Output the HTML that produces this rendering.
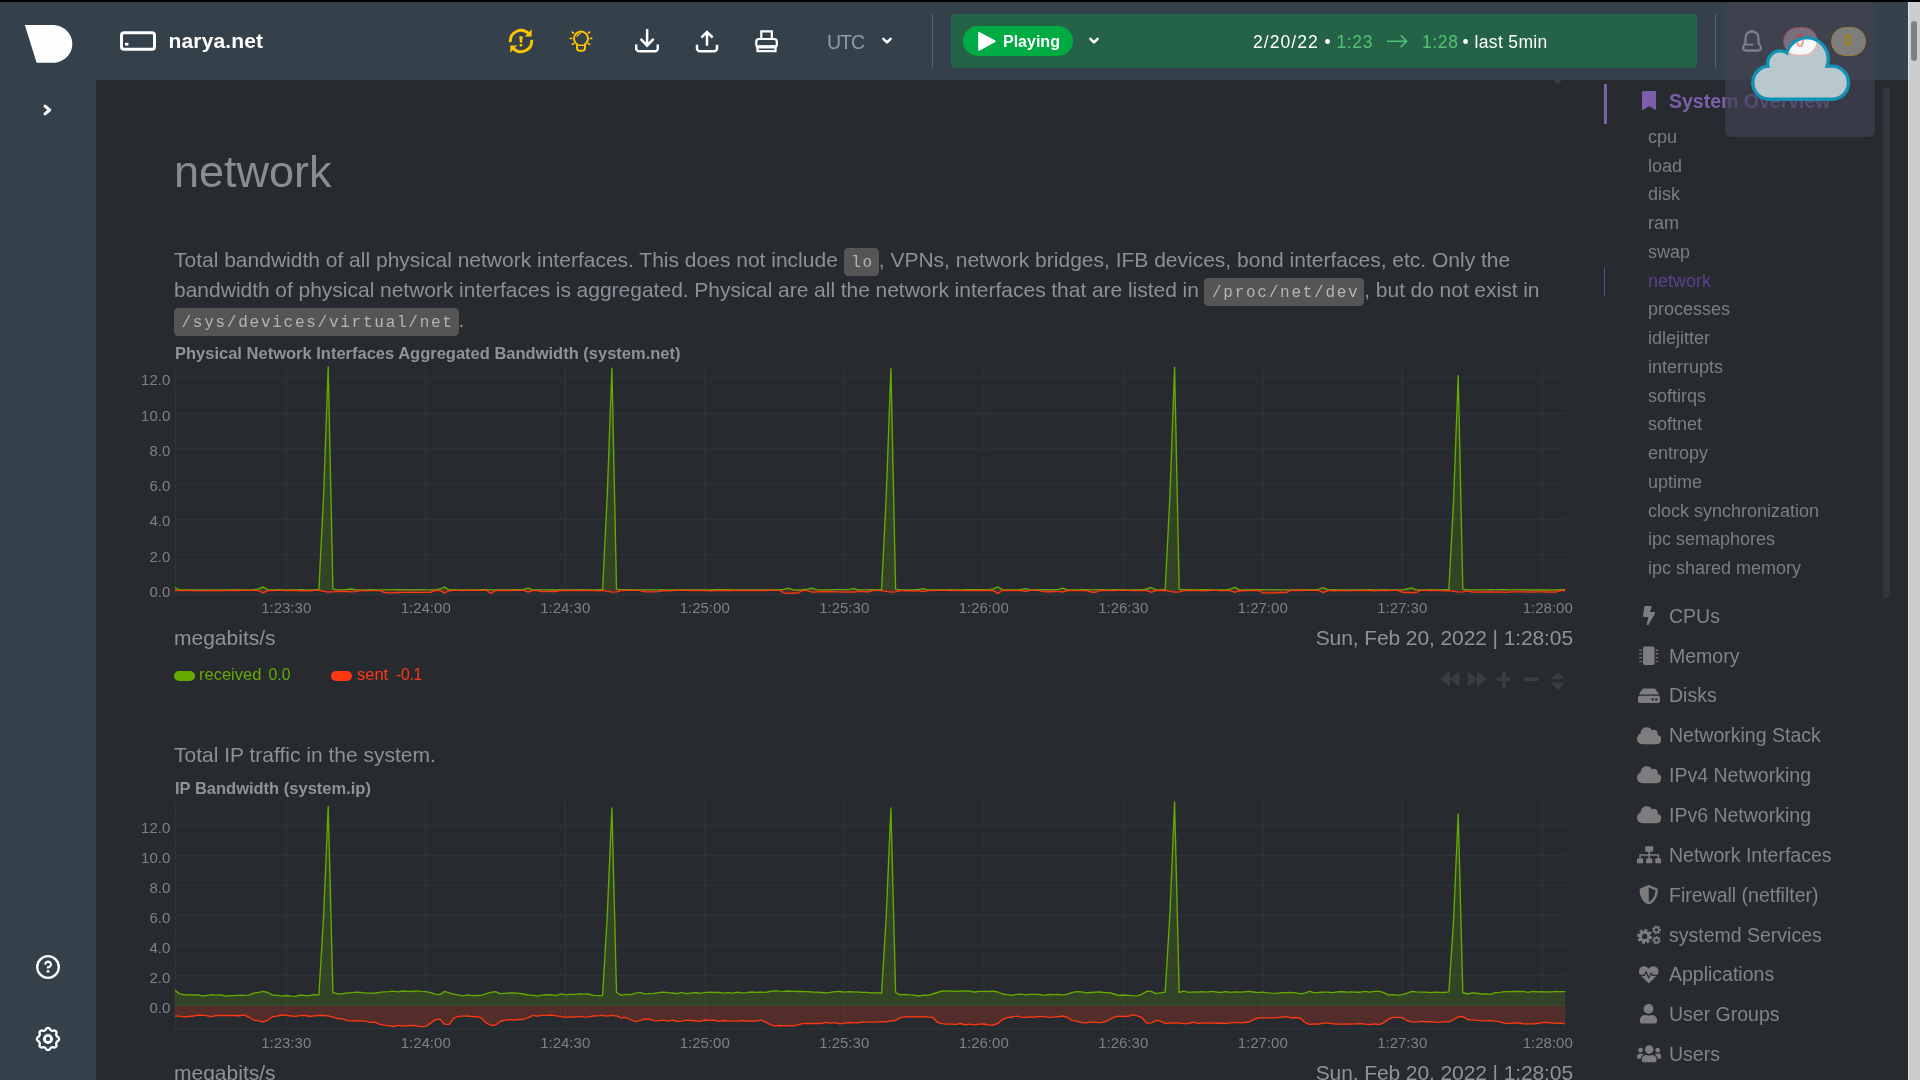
<!DOCTYPE html>
<html lang="en">
<head>
<meta charset="utf-8">
<title>narya.net - netdata dashboard</title>
<style>
*{box-sizing:border-box;margin:0;padding:0}
html,body{width:1920px;height:1080px;overflow:hidden;background:#272b30;font-family:"Liberation Sans",sans-serif;color:#8f9397}
.abs{position:absolute}
#topline{left:0;top:0;width:1920px;height:2px;background:#000}
#header{left:0;top:2px;width:1908px;height:78px;background:#35414a}
#sidebar{left:0;top:80px;width:96px;height:1000px;background:#35414a}
#pagescroll{left:1908px;top:2px;width:12px;height:1078px;background:#cdcdcd;border-left:1px solid #e4e4e4}
#pagescroll i{position:absolute;left:2.2px;top:19px;width:5.8px;height:40px;border-radius:3px;background:#7d8282}
.hd{font-family:"Liberation Sans",sans-serif;white-space:nowrap}
#nodename{left:168.5px;top:28px;font-size:21px;font-weight:bold;color:#fff;line-height:26px;letter-spacing:.15px}
#utc{left:827px;top:29.5px;font-size:19.5px;letter-spacing:-1px;color:#8f9ba3;line-height:24px}
.vsep{width:1px;background:#55626b;top:14px;height:54px}
#dpick{left:951px;top:14px;width:746px;height:54px;background:#256349;border-radius:4px}
#playing{left:963px;top:26px;width:110px;height:30px;border-radius:15px;background:#00ab44}
#playing span{position:absolute;left:40px;top:4.7px;font-size:16px;font-weight:bold;color:#fff;line-height:22px}
.rg{top:29.5px;font-size:17.5px;color:#fff;line-height:24px}
h1{position:absolute;left:174px;top:146px;font-size:45px;font-weight:normal;color:#888c93;line-height:52px}
.p{position:absolute;left:174px;font-size:21px;line-height:30px;color:#8c9097;white-space:nowrap}
code{font-family:"Liberation Mono",monospace;font-size:16px;letter-spacing:1.74px;background:#555;color:#b4b4b4;border-radius:4.5px;padding:6px 4.9px 3.9px 7.5px;word-spacing:0}
.ctitle{position:absolute;left:175px;font-size:16.5px;font-weight:bold;color:#8f9397;line-height:20px;white-space:nowrap}
.units{position:absolute;left:174px;font-size:21px;line-height:24px;color:#8f9397;white-space:nowrap}
.date{position:absolute;right:347px;font-size:21px;letter-spacing:-.1px;line-height:24px;color:#8f9397;white-space:nowrap}
.leg{position:absolute;font-size:16.5px;line-height:20px;white-space:nowrap}
.pill{position:absolute;width:21px;height:10px;border-radius:5px}
svg text{font-family:"Liberation Sans",sans-serif}
#nav a{position:absolute;white-space:nowrap;text-decoration:none}
#nav .sub{left:1648px;font-size:18px;color:#7b7e81;line-height:20px}
#nav .main{left:1669px;font-size:19.5px;color:#828486;line-height:24px}
#nav .ico{position:absolute;left:1635px;width:26px;height:24px}
#osd{left:1725px;top:2px;width:150px;height:135px;border-radius:6px;background:rgba(66,67,83,.68)}
</style>
</head>
<body>
<div id="root" style="position:absolute;left:0;top:0;width:1920px;height:1080px;will-change:transform">
<div class="abs" id="header"></div>
<div class="abs" id="sidebar"></div>

<!-- header content -->
<div class="abs hd" id="nodename">narya.net</div>
<div class="abs hd" id="utc">UTC</div>
<div class="abs vsep" style="left:932px"></div>
<div class="abs" id="dpick"></div>
<div class="abs" id="playing"><span>Playing</span></div>
<div class="abs hd rg" style="left:1253px;letter-spacing:1.05px">2/20/22</div><div class="abs hd rg" style="left:1324.5px">•</div><div class="abs hd rg" style="left:1336.5px;letter-spacing:.6px;color:#55c273">1:23</div><div class="abs hd rg" style="left:1422px;letter-spacing:.6px;color:#55c273">1:28</div><div class="abs hd rg" style="left:1462.5px">•</div><div class="abs hd rg" style="left:1474.5px;letter-spacing:.35px">last 5min</div>
<div class="abs vsep" style="left:1715px"></div>
<svg class="abs" style="left:24px;top:24px" width="50" height="40" viewBox="0 0 50 40"><path d="M0.8 1H28.5C39.5 1 48.3 9.5 48.3 20S39.5 38.8 28.5 38.8H12.6Z" fill="#fdfdfd"/></svg>
<svg class="abs" style="left:40px;top:100px" width="16" height="20" viewBox="0 0 16 20"><path d="M5 6.1L9.7 10L5 13.9" fill="none" stroke="#fff" stroke-width="3" stroke-linecap="round" stroke-linejoin="round"/></svg>
<svg class="abs" style="left:118px;top:29px" width="40" height="24" viewBox="0 0 40 24"><rect x="3.5" y="3.7" width="33" height="16.6" rx="2.6" fill="none" stroke="#fff" stroke-width="3"/><rect x="7" y="13.8" width="3.4" height="2.8" fill="#fff"/></svg>
<svg class="abs" style="left:507px;top:27px" width="28" height="28" viewBox="0 0 28 28" fill="none" stroke="#fcc400" stroke-width="2.9"><path d="M3.4 15.2A10.7 10.7 0 0 1 21.5 6.4"/><path d="M24.6 12.8A10.7 10.7 0 0 1 6.5 21.6"/><path d="M24.7 2.2V9.4H17.8Z" fill="#fcc400" stroke="none"/><path d="M3.3 25.8V18.6H10.2Z" fill="#fcc400" stroke="none"/><path d="M12.3 9.2h3.4l-.6 6.6h-2.2z" fill="#fcc400" stroke="none"/><rect x="12.6" y="16.9" width="2.8" height="2.6" rx=".8" fill="#fcc400" stroke="none"/></svg>
<svg class="abs" style="left:567px;top:27px" width="28" height="28" viewBox="0 0 28 28" fill="none" stroke="#fcc400" stroke-width="2" stroke-linecap="round"><path d="M10 17.3A7 7 0 1 1 18 17.3V21.2A2.6 2.6 0 0 1 15.400 23.800H12.600A2.600 2.600 0 0 1 10 21.200Z"/><path d="M10.800 18.200H17.2" stroke-width="1.6"/><path d="M10 9.500A4.500 4.500 0 0 1 13.400 6.600" stroke-width="1.300"/><path d="M3.400 11.400h1.100M23.500 11.400h1.100M5.400 5.200l.9.800M22.600 5.200l-.9.800M5.500 17.300l.9-.6M22.500 17.300l-.9-.6" stroke-width="1.800"/></svg>
<svg class="abs" style="left:633px;top:27px" width="28" height="28" viewBox="0 0 28 28" fill="none" stroke="#fff" stroke-width="2.500" stroke-linejoin="round"><path d="M3.200 17.400V21.300A3 3 0 0 0 6.200 24.300H21.800A3 3 0 0 0 24.800 21.300V17.400"/><path d="M14.100 2V18M7.600 11.900L14.100 18.600L20.600 11.900" stroke-linejoin="miter"/></svg>
<svg class="abs" style="left:693px;top:27px" width="28" height="28" viewBox="0 0 28 28" fill="none" stroke="#fff" stroke-width="2.500" stroke-linejoin="round"><path d="M4 17.800V21.300A3 3 0 0 0 7 24.300H21A3 3 0 0 0 24 21.300V17.800"/><path d="M14 18.800V5M8.400 10.500L14 4.900L19.600 10.500" stroke-linejoin="miter"/></svg>
<svg class="abs" style="left:752px;top:27px" width="28" height="28" viewBox="0 0 28 28" fill="none" stroke="#fff" stroke-width="2.200"><path d="M9.300 12V4.400H19.800V12"/><rect x="4.300" y="12" width="20.500" height="8.400" rx="2.600"/><path d="M5.500 18.900H23.600" stroke-width="1.600"/><path d="M5.500 20.600V24.200H23.500V20.600"/></svg>
<svg class="abs" style="left:879px;top:33px" width="16" height="16" viewBox="0 0 16 16"><path d="M4.400 5.800L8 9.400L11.600 5.800" fill="none" stroke="#fff" stroke-width="2.500" stroke-linecap="round" stroke-linejoin="round"/></svg>
<svg class="abs" style="left:1086px;top:33px" width="16" height="16" viewBox="0 0 16 16"><path d="M4.400 5.800L8 9.400L11.600 5.800" fill="none" stroke="#fff" stroke-width="2.500" stroke-linecap="round" stroke-linejoin="round"/></svg>
<svg class="abs" style="left:976px;top:30px" width="22" height="22" viewBox="0 0 22 22"><path d="M3 2.600L19 11.300L3 20Z" fill="#fff" stroke="#fff" stroke-width="1.600" stroke-linejoin="round"/></svg>
<svg class="abs" style="left:1385px;top:33px" width="24" height="16" viewBox="0 0 24 16"><path d="M2 8.200H21.500M15.600 2.300L21.700 8.200L15.600 14.100" fill="none" stroke="#55c273" stroke-width="1.500"/></svg>
<svg class="abs" style="left:34px;top:953px" width="28" height="28" viewBox="0 0 28 28"><circle cx="14" cy="14" r="10.800" fill="none" stroke="#fff" stroke-width="2.300"/><path d="M11.300 11.600A2.800 2.800 0 1 1 14 14.300V15.400" fill="none" stroke="#fff" stroke-width="2.200"/><circle cx="14" cy="18.400" r="1.400" fill="#fff"/></svg>
<svg class="abs" style="left:34px;top:1025px" width="28" height="28" viewBox="0 0 28 28"><path d="M25.05 14.00L24.95 14.72L24.66 15.40L23.91 15.97L23.13 16.45L22.73 16.96L22.45 17.50L22.27 18.08L22.18 18.73L22.40 19.61L22.53 20.54L22.25 21.24L21.81 21.81L21.24 22.25L20.54 22.53L19.61 22.40L18.73 22.18L18.08 22.27L17.50 22.45L16.96 22.73L16.45 23.13L15.97 23.91L15.40 24.66L14.72 24.95L14.00 25.05L13.28 24.95L12.60 24.66L12.03 23.91L11.55 23.13L11.04 22.73L10.50 22.45L9.92 22.27L9.27 22.18L8.39 22.40L7.46 22.53L6.76 22.25L6.19 21.81L5.75 21.24L5.47 20.54L5.60 19.61L5.82 18.73L5.73 18.08L5.55 17.50L5.27 16.96L4.87 16.45L4.09 15.97L3.34 15.40L3.05 14.72L2.95 14.00L3.05 13.28L3.34 12.60L4.09 12.03L4.87 11.55L5.27 11.04L5.55 10.50L5.73 9.92L5.82 9.27L5.60 8.39L5.47 7.46L5.75 6.76L6.19 6.19L6.76 5.75L7.46 5.47L8.39 5.60L9.27 5.82L9.92 5.73L10.50 5.55L11.04 5.27L11.55 4.87L12.03 4.09L12.60 3.34L13.28 3.05L14.00 2.95L14.72 3.05L15.40 3.34L15.97 4.09L16.45 4.87L16.96 5.27L17.50 5.55L18.08 5.73L18.73 5.82L19.61 5.60L20.54 5.47L21.24 5.75L21.81 6.19L22.25 6.76L22.53 7.46L22.40 8.39L22.18 9.27L22.27 9.92L22.45 10.50L22.73 11.04L23.13 11.55L23.91 12.03L24.66 12.60L24.95 13.28Z" fill="none" stroke="#fff" stroke-width="2.300" stroke-linejoin="round"/><circle cx="14" cy="14" r="3.600" fill="none" stroke="#fff" stroke-width="2.900"/></svg>

<!-- main -->
<svg class="abs" style="left:1495px;top:80px" width="80" height="6" viewBox="0 0 80 6"><path d="M58.700 0H67L62.900 4.200Z" fill="#3a3d43"/><rect x="7.700" y="0" width="2.800" height="1" fill="#34373c"/></svg>
<h1>network</h1>
<div class="p" style="top:245px">Total bandwidth of all physical network interfaces. This does not include <code>lo</code>, VPNs, network bridges, IFB devices, bond interfaces, etc. Only the</div>
<div class="p" style="top:275px;word-spacing:-.22px">bandwidth of physical network interfaces is aggregated. Physical are all the network interfaces that are listed in <code>/proc/net/dev</code>, but do not exist in</div>
<div class="p" style="top:305px"><code>/sys/devices/virtual/net</code>.</div>
<div class="ctitle" style="top:343px">Physical Network Interfaces Aggregated Bandwidth (system.net)</div>
<svg class="abs" style="left:0;top:0;pointer-events:none" width="1620" height="1080" viewBox="0 0 1620 1080">
<path d="M286.4 365.2V594.4M425.9 365.2V594.4M565.4 365.2V594.4M704.9 365.2V594.4M844.4 365.2V594.4M983.9 365.2V594.4M1123.4 365.2V594.4M1262.9 365.2V594.4M1402.4 365.2V594.4M1541.9 365.2V594.4M175.6 590.0H1565.2M175.6 554.7H1565.2M175.6 519.4H1565.2M175.6 484.1H1565.2M175.6 448.8H1565.2M175.6 413.5H1565.2M175.6 378.2H1565.2M175.6 365.2V594.4H1565.2" fill="none" stroke="#2b3539" stroke-width="1.3"/>
<path d="M174.8 590.0 L174.8 587.5 L179.4 589.9 L184.1 589.8 L188.7 590.0 L193.4 589.8 L198.0 589.9 L202.7 590.0 L207.3 589.8 L212.0 590.0 L216.6 589.8 L221.3 590.0 L225.9 590.0 L230.6 589.9 L235.2 589.7 L239.9 590.0 L244.5 589.9 L249.2 589.8 L253.8 589.7 L258.5 588.8 L263.1 587.0 L267.8 589.7 L272.4 590.0 L277.1 589.7 L281.8 589.9 L286.4 589.9 L291.0 590.0 L295.7 589.9 L300.3 589.7 L305.0 589.9 L309.6 589.8 L314.3 589.8 L318.9 589.5 L323.6 496.3 L328.2 366.9 L332.9 589.1 L337.5 589.9 L342.2 589.8 L346.8 589.5 L351.5 589.0 L356.1 589.8 L360.8 589.8 L365.4 589.9 L370.1 589.7 L374.8 589.8 L379.4 589.9 L384.0 589.8 L388.7 589.8 L393.3 589.7 L398.0 589.7 L402.6 589.9 L407.3 589.7 L411.9 590.0 L416.6 589.9 L421.2 589.7 L425.9 589.9 L430.5 589.8 L435.2 590.0 L439.9 588.8 L444.5 587.1 L449.1 589.8 L453.8 589.7 L458.4 589.9 L463.1 589.8 L467.8 589.8 L472.4 589.8 L477.0 589.8 L481.7 589.7 L486.4 589.7 L491.0 589.8 L495.6 589.8 L500.3 590.0 L504.9 589.8 L509.6 589.8 L514.2 589.6 L518.9 589.7 L523.5 589.3 L528.2 588.1 L532.9 589.8 L537.5 590.0 L542.1 589.8 L546.8 589.9 L551.5 590.0 L556.1 590.0 L560.8 589.7 L565.4 590.0 L570.0 589.9 L574.7 589.9 L579.4 589.7 L584.0 590.0 L588.6 589.8 L593.3 589.8 L598.0 589.7 L602.6 589.5 L607.2 496.8 L611.9 368.1 L616.5 589.1 L621.2 589.9 L625.9 589.7 L630.5 589.7 L635.1 589.9 L639.8 589.9 L644.5 589.9 L649.1 589.9 L653.8 589.8 L658.4 589.8 L663.0 589.9 L667.7 590.0 L672.4 589.9 L677.0 589.9 L681.7 589.8 L686.3 589.7 L691.0 589.8 L695.6 589.8 L700.2 589.8 L704.9 589.8 L709.5 590.0 L714.2 589.7 L718.9 589.7 L723.5 589.7 L728.2 589.7 L732.8 589.9 L737.5 589.9 L742.1 590.0 L746.8 589.8 L751.4 590.0 L756.0 590.0 L760.7 589.9 L765.4 589.9 L770.0 589.9 L774.7 590.0 L779.3 590.0 L784.0 589.3 L788.6 588.2 L793.2 589.9 L797.9 590.0 L802.6 589.7 L807.2 589.2 L811.9 588.2 L816.5 589.9 L821.1 589.9 L825.8 589.9 L830.5 590.0 L835.1 589.7 L839.8 589.6 L844.4 589.8 L849.1 589.3 L853.7 588.6 L858.4 590.0 L863.0 589.9 L867.6 589.9 L872.3 589.7 L877.0 589.9 L881.6 589.5 L886.2 497.0 L890.9 368.5 L895.6 589.1 L900.2 589.8 L904.9 590.0 L909.5 589.8 L914.1 589.7 L918.8 589.3 L923.5 588.7 L928.1 589.9 L932.8 589.9 L937.4 589.9 L942.1 589.7 L946.7 589.8 L951.4 589.7 L956.0 589.9 L960.6 589.9 L965.3 589.7 L970.0 589.7 L974.6 589.7 L979.2 589.7 L983.9 589.7 L988.6 589.7 L993.2 588.9 L997.9 586.8 L1002.5 589.9 L1007.1 590.0 L1011.8 590.0 L1016.5 589.9 L1021.1 589.5 L1025.8 588.7 L1030.4 589.7 L1035.1 589.8 L1039.7 589.7 L1044.3 589.7 L1049.0 589.7 L1053.7 589.9 L1058.3 589.3 L1063.0 588.2 L1067.6 589.9 L1072.2 589.9 L1076.9 589.8 L1081.6 589.7 L1086.2 589.7 L1090.8 589.8 L1095.5 589.8 L1100.2 589.7 L1104.8 590.0 L1109.5 589.8 L1114.1 589.7 L1118.8 589.7 L1123.4 589.7 L1128.1 589.8 L1132.7 589.9 L1137.3 589.7 L1142.0 589.9 L1146.7 589.0 L1151.3 587.5 L1156.0 589.9 L1160.6 589.9 L1165.2 589.5 L1169.9 496.4 L1174.6 367.3 L1179.2 589.1 L1183.8 589.9 L1188.5 589.7 L1193.2 589.7 L1197.8 589.9 L1202.5 589.7 L1207.1 589.7 L1211.8 589.8 L1216.4 589.9 L1221.1 589.8 L1225.7 590.0 L1230.3 589.2 L1235.0 587.4 L1239.7 589.8 L1244.3 589.8 L1249.0 589.7 L1253.6 589.8 L1258.2 589.7 L1262.9 589.7 L1267.6 589.9 L1272.2 589.9 L1276.8 589.9 L1281.5 589.9 L1286.2 589.8 L1290.8 589.9 L1295.5 589.9 L1300.1 590.0 L1304.8 589.7 L1309.4 589.9 L1314.1 589.8 L1318.7 589.1 L1323.3 587.6 L1328.0 589.9 L1332.7 589.7 L1337.3 589.8 L1342.0 589.8 L1346.6 589.8 L1351.2 590.0 L1355.9 589.8 L1360.6 589.9 L1365.2 590.0 L1369.8 589.7 L1374.5 589.9 L1379.2 589.8 L1383.8 589.7 L1388.5 589.8 L1393.1 589.9 L1397.8 589.8 L1402.4 589.8 L1407.1 589.0 L1411.7 587.8 L1416.3 589.8 L1421.0 589.9 L1425.7 589.9 L1430.3 589.7 L1435.0 589.8 L1439.6 589.8 L1444.2 589.7 L1448.9 589.5 L1453.6 500.0 L1458.2 375.7 L1462.8 589.1 L1467.5 589.8 L1472.2 589.8 L1476.8 589.8 L1481.5 589.8 L1486.1 589.8 L1490.8 589.7 L1495.4 589.8 L1500.1 589.7 L1504.7 589.7 L1509.3 589.9 L1514.0 589.8 L1518.7 589.7 L1523.3 589.7 L1528.0 590.0 L1532.6 590.0 L1537.2 589.8 L1541.9 590.0 L1546.6 589.9 L1551.2 590.0 L1555.8 589.8 L1560.5 589.7 L1565.2 589.7 L1565.2 590.0 Z" fill="#66aa00" fill-opacity=".2"/>
<path d="M174.8 587.5 L179.4 589.9 L184.1 589.8 L188.7 590.0 L193.4 589.8 L198.0 589.9 L202.7 590.0 L207.3 589.8 L212.0 590.0 L216.6 589.8 L221.3 590.0 L225.9 590.0 L230.6 589.9 L235.2 589.7 L239.9 590.0 L244.5 589.9 L249.2 589.8 L253.8 589.7 L258.5 588.8 L263.1 587.0 L267.8 589.7 L272.4 590.0 L277.1 589.7 L281.8 589.9 L286.4 589.9 L291.0 590.0 L295.7 589.9 L300.3 589.7 L305.0 589.9 L309.6 589.8 L314.3 589.8 L318.9 589.5 L323.6 496.3 L328.2 366.9 L332.9 589.1 L337.5 589.9 L342.2 589.8 L346.8 589.5 L351.5 589.0 L356.1 589.8 L360.8 589.8 L365.4 589.9 L370.1 589.7 L374.8 589.8 L379.4 589.9 L384.0 589.8 L388.7 589.8 L393.3 589.7 L398.0 589.7 L402.6 589.9 L407.3 589.7 L411.9 590.0 L416.6 589.9 L421.2 589.7 L425.9 589.9 L430.5 589.8 L435.2 590.0 L439.9 588.8 L444.5 587.1 L449.1 589.8 L453.8 589.7 L458.4 589.9 L463.1 589.8 L467.8 589.8 L472.4 589.8 L477.0 589.8 L481.7 589.7 L486.4 589.7 L491.0 589.8 L495.6 589.8 L500.3 590.0 L504.9 589.8 L509.6 589.8 L514.2 589.6 L518.9 589.7 L523.5 589.3 L528.2 588.1 L532.9 589.8 L537.5 590.0 L542.1 589.8 L546.8 589.9 L551.5 590.0 L556.1 590.0 L560.8 589.7 L565.4 590.0 L570.0 589.9 L574.7 589.9 L579.4 589.7 L584.0 590.0 L588.6 589.8 L593.3 589.8 L598.0 589.7 L602.6 589.5 L607.2 496.8 L611.9 368.1 L616.5 589.1 L621.2 589.9 L625.9 589.7 L630.5 589.7 L635.1 589.9 L639.8 589.9 L644.5 589.9 L649.1 589.9 L653.8 589.8 L658.4 589.8 L663.0 589.9 L667.7 590.0 L672.4 589.9 L677.0 589.9 L681.7 589.8 L686.3 589.7 L691.0 589.8 L695.6 589.8 L700.2 589.8 L704.9 589.8 L709.5 590.0 L714.2 589.7 L718.9 589.7 L723.5 589.7 L728.2 589.7 L732.8 589.9 L737.5 589.9 L742.1 590.0 L746.8 589.8 L751.4 590.0 L756.0 590.0 L760.7 589.9 L765.4 589.9 L770.0 589.9 L774.7 590.0 L779.3 590.0 L784.0 589.3 L788.6 588.2 L793.2 589.9 L797.9 590.0 L802.6 589.7 L807.2 589.2 L811.9 588.2 L816.5 589.9 L821.1 589.9 L825.8 589.9 L830.5 590.0 L835.1 589.7 L839.8 589.6 L844.4 589.8 L849.1 589.3 L853.7 588.6 L858.4 590.0 L863.0 589.9 L867.6 589.9 L872.3 589.7 L877.0 589.9 L881.6 589.5 L886.2 497.0 L890.9 368.5 L895.6 589.1 L900.2 589.8 L904.9 590.0 L909.5 589.8 L914.1 589.7 L918.8 589.3 L923.5 588.7 L928.1 589.9 L932.8 589.9 L937.4 589.9 L942.1 589.7 L946.7 589.8 L951.4 589.7 L956.0 589.9 L960.6 589.9 L965.3 589.7 L970.0 589.7 L974.6 589.7 L979.2 589.7 L983.9 589.7 L988.6 589.7 L993.2 588.9 L997.9 586.8 L1002.5 589.9 L1007.1 590.0 L1011.8 590.0 L1016.5 589.9 L1021.1 589.5 L1025.8 588.7 L1030.4 589.7 L1035.1 589.8 L1039.7 589.7 L1044.3 589.7 L1049.0 589.7 L1053.7 589.9 L1058.3 589.3 L1063.0 588.2 L1067.6 589.9 L1072.2 589.9 L1076.9 589.8 L1081.6 589.7 L1086.2 589.7 L1090.8 589.8 L1095.5 589.8 L1100.2 589.7 L1104.8 590.0 L1109.5 589.8 L1114.1 589.7 L1118.8 589.7 L1123.4 589.7 L1128.1 589.8 L1132.7 589.9 L1137.3 589.7 L1142.0 589.9 L1146.7 589.0 L1151.3 587.5 L1156.0 589.9 L1160.6 589.9 L1165.2 589.5 L1169.9 496.4 L1174.6 367.3 L1179.2 589.1 L1183.8 589.9 L1188.5 589.7 L1193.2 589.7 L1197.8 589.9 L1202.5 589.7 L1207.1 589.7 L1211.8 589.8 L1216.4 589.9 L1221.1 589.8 L1225.7 590.0 L1230.3 589.2 L1235.0 587.4 L1239.7 589.8 L1244.3 589.8 L1249.0 589.7 L1253.6 589.8 L1258.2 589.7 L1262.9 589.7 L1267.6 589.9 L1272.2 589.9 L1276.8 589.9 L1281.5 589.9 L1286.2 589.8 L1290.8 589.9 L1295.5 589.9 L1300.1 590.0 L1304.8 589.7 L1309.4 589.9 L1314.1 589.8 L1318.7 589.1 L1323.3 587.6 L1328.0 589.9 L1332.7 589.7 L1337.3 589.8 L1342.0 589.8 L1346.6 589.8 L1351.2 590.0 L1355.9 589.8 L1360.6 589.9 L1365.2 590.0 L1369.8 589.7 L1374.5 589.9 L1379.2 589.8 L1383.8 589.7 L1388.5 589.8 L1393.1 589.9 L1397.8 589.8 L1402.4 589.8 L1407.1 589.0 L1411.7 587.8 L1416.3 589.8 L1421.0 589.9 L1425.7 589.9 L1430.3 589.7 L1435.0 589.8 L1439.6 589.8 L1444.2 589.7 L1448.9 589.5 L1453.6 500.0 L1458.2 375.7 L1462.8 589.1 L1467.5 589.8 L1472.2 589.8 L1476.8 589.8 L1481.5 589.8 L1486.1 589.8 L1490.8 589.7 L1495.4 589.8 L1500.1 589.7 L1504.7 589.7 L1509.3 589.9 L1514.0 589.8 L1518.7 589.7 L1523.3 589.7 L1528.0 590.0 L1532.6 590.0 L1537.2 589.8 L1541.9 590.0 L1546.6 589.9 L1551.2 590.0 L1555.8 589.8 L1560.5 589.7 L1565.2 589.7" fill="none" stroke="#66aa00" stroke-width="1.35" stroke-linejoin="round"/>
<path d="M174.8 590.0 L174.8 590.3 L179.4 590.6 L184.1 590.6 L188.7 590.3 L193.4 590.7 L198.0 590.8 L202.7 590.4 L207.3 590.8 L212.0 590.5 L216.6 590.5 L221.3 590.8 L225.9 590.7 L230.6 590.4 L235.2 590.5 L239.9 590.5 L244.5 590.4 L249.2 590.4 L253.8 590.4 L258.5 590.6 L263.1 592.8 L267.8 590.6 L272.4 590.5 L277.1 590.3 L281.8 590.4 L286.4 590.6 L291.0 590.5 L295.7 590.3 L300.3 590.8 L305.0 590.7 L309.6 590.8 L314.3 590.3 L318.9 590.4 L323.6 591.4 L328.2 592.1 L332.9 591.8 L337.5 591.5 L342.2 591.5 L346.8 591.5 L351.5 591.9 L356.1 591.7 L360.8 590.3 L365.4 590.8 L370.1 590.6 L374.8 590.6 L379.4 590.3 L384.0 592.4 L388.7 592.8 L393.3 592.8 L398.0 592.5 L402.6 592.4 L407.3 592.4 L411.9 592.3 L416.6 592.5 L421.2 592.3 L425.9 592.4 L430.5 592.4 L435.2 590.5 L439.9 590.4 L444.5 592.9 L449.1 590.8 L453.8 590.4 L458.4 590.3 L463.1 590.5 L467.8 590.4 L472.4 590.3 L477.0 590.4 L481.7 590.3 L486.4 590.4 L491.0 593.5 L495.6 590.4 L500.3 590.7 L504.9 590.4 L509.6 590.5 L514.2 590.4 L518.9 590.4 L523.5 590.3 L528.2 592.0 L532.9 590.3 L537.5 590.7 L542.1 591.7 L546.8 591.6 L551.5 591.5 L556.1 591.5 L560.8 590.3 L565.4 590.7 L570.0 590.5 L574.7 590.5 L579.4 590.7 L584.0 590.5 L588.6 590.5 L593.3 590.6 L598.0 590.8 L602.6 590.4 L607.2 591.4 L611.9 592.1 L616.5 591.8 L621.2 590.5 L625.9 590.4 L630.5 590.3 L635.1 590.3 L639.8 590.3 L644.5 591.9 L649.1 591.8 L653.8 591.8 L658.4 591.6 L663.0 590.7 L667.7 590.7 L672.4 590.6 L677.0 590.4 L681.7 590.4 L686.3 590.4 L691.0 590.5 L695.6 590.3 L700.2 590.5 L704.9 590.4 L709.5 590.8 L714.2 590.8 L718.9 590.6 L723.5 590.4 L728.2 590.8 L732.8 590.4 L737.5 590.5 L742.1 590.3 L746.8 590.5 L751.4 590.5 L756.0 590.5 L760.7 590.4 L765.4 590.5 L770.0 590.3 L774.7 590.4 L779.3 590.3 L784.0 593.0 L788.6 593.3 L793.2 592.9 L797.9 593.1 L802.6 590.4 L807.2 590.6 L811.9 592.1 L816.5 592.0 L821.1 591.7 L825.8 591.7 L830.5 591.7 L835.1 591.8 L839.8 591.8 L844.4 592.1 L849.1 592.0 L853.7 592.1 L858.4 591.6 L863.0 591.6 L867.6 592.0 L872.3 590.7 L877.0 590.6 L881.6 590.7 L886.2 591.4 L890.9 592.1 L895.6 591.8 L900.2 590.5 L904.9 590.7 L909.5 590.7 L914.1 590.7 L918.8 590.6 L923.5 591.7 L928.1 590.6 L932.8 590.6 L937.4 590.4 L942.1 590.3 L946.7 590.3 L951.4 590.5 L956.0 590.3 L960.6 590.7 L965.3 590.6 L970.0 590.6 L974.6 590.6 L979.2 590.6 L983.9 590.5 L988.6 590.3 L993.2 590.7 L997.9 593.4 L1002.5 590.5 L1007.1 590.5 L1011.8 590.6 L1016.5 590.3 L1021.1 590.7 L1025.8 591.4 L1030.4 590.3 L1035.1 590.4 L1039.7 590.7 L1044.3 591.9 L1049.0 591.7 L1053.7 591.7 L1058.3 591.4 L1063.0 592.1 L1067.6 590.5 L1072.2 590.6 L1076.9 590.7 L1081.6 590.6 L1086.2 590.6 L1090.8 592.0 L1095.5 592.3 L1100.2 590.4 L1104.8 590.7 L1109.5 590.4 L1114.1 590.6 L1118.8 590.3 L1123.4 590.3 L1128.1 590.4 L1132.7 590.6 L1137.3 590.6 L1142.0 590.6 L1146.7 590.4 L1151.3 592.4 L1156.0 590.5 L1160.6 590.5 L1165.2 590.3 L1169.9 591.4 L1174.6 592.1 L1179.2 591.8 L1183.8 590.8 L1188.5 590.3 L1193.2 590.5 L1197.8 590.7 L1202.5 590.8 L1207.1 590.5 L1211.8 590.4 L1216.4 590.4 L1221.1 590.8 L1225.7 590.4 L1230.3 590.6 L1235.0 592.4 L1239.7 590.5 L1244.3 590.8 L1249.0 590.3 L1253.6 590.7 L1258.2 590.5 L1262.9 592.9 L1267.6 592.9 L1272.2 593.0 L1276.8 592.6 L1281.5 592.5 L1286.2 592.6 L1290.8 590.3 L1295.5 590.5 L1300.1 590.5 L1304.8 590.4 L1309.4 590.3 L1314.1 590.4 L1318.7 590.4 L1323.3 592.6 L1328.0 590.3 L1332.7 590.7 L1337.3 590.7 L1342.0 590.3 L1346.6 590.8 L1351.2 590.6 L1355.9 590.7 L1360.6 590.4 L1365.2 590.5 L1369.8 590.5 L1374.5 590.8 L1379.2 590.6 L1383.8 590.5 L1388.5 590.5 L1393.1 590.4 L1397.8 590.3 L1402.4 592.4 L1407.1 592.5 L1411.7 592.6 L1416.3 592.5 L1421.0 590.4 L1425.7 590.4 L1430.3 590.5 L1435.0 590.4 L1439.6 590.5 L1444.2 590.8 L1448.9 590.7 L1453.6 591.4 L1458.2 592.1 L1462.8 591.8 L1467.5 590.8 L1472.2 592.1 L1476.8 592.2 L1481.5 592.0 L1486.1 592.1 L1490.8 591.8 L1495.4 592.2 L1500.1 591.9 L1504.7 592.3 L1509.3 592.1 L1514.0 591.9 L1518.7 591.8 L1523.3 591.9 L1528.0 592.1 L1532.6 592.1 L1537.2 591.8 L1541.9 591.8 L1546.6 592.0 L1551.2 592.1 L1555.8 592.0 L1560.5 590.6 L1565.2 590.5 L1565.2 590.0 Z" fill="#fe3912" fill-opacity=".2"/>
<path d="M174.8 590.3 L179.4 590.6 L184.1 590.6 L188.7 590.3 L193.4 590.7 L198.0 590.8 L202.7 590.4 L207.3 590.8 L212.0 590.5 L216.6 590.5 L221.3 590.8 L225.9 590.7 L230.6 590.4 L235.2 590.5 L239.9 590.5 L244.5 590.4 L249.2 590.4 L253.8 590.4 L258.5 590.6 L263.1 592.8 L267.8 590.6 L272.4 590.5 L277.1 590.3 L281.8 590.4 L286.4 590.6 L291.0 590.5 L295.7 590.3 L300.3 590.8 L305.0 590.7 L309.6 590.8 L314.3 590.3 L318.9 590.4 L323.6 591.4 L328.2 592.1 L332.9 591.8 L337.5 591.5 L342.2 591.5 L346.8 591.5 L351.5 591.9 L356.1 591.7 L360.8 590.3 L365.4 590.8 L370.1 590.6 L374.8 590.6 L379.4 590.3 L384.0 592.4 L388.7 592.8 L393.3 592.8 L398.0 592.5 L402.6 592.4 L407.3 592.4 L411.9 592.3 L416.6 592.5 L421.2 592.3 L425.9 592.4 L430.5 592.4 L435.2 590.5 L439.9 590.4 L444.5 592.9 L449.1 590.8 L453.8 590.4 L458.4 590.3 L463.1 590.5 L467.8 590.4 L472.4 590.3 L477.0 590.4 L481.7 590.3 L486.4 590.4 L491.0 593.5 L495.6 590.4 L500.3 590.7 L504.9 590.4 L509.6 590.5 L514.2 590.4 L518.9 590.4 L523.5 590.3 L528.2 592.0 L532.9 590.3 L537.5 590.7 L542.1 591.7 L546.8 591.6 L551.5 591.5 L556.1 591.5 L560.8 590.3 L565.4 590.7 L570.0 590.5 L574.7 590.5 L579.4 590.7 L584.0 590.5 L588.6 590.5 L593.3 590.6 L598.0 590.8 L602.6 590.4 L607.2 591.4 L611.9 592.1 L616.5 591.8 L621.2 590.5 L625.9 590.4 L630.5 590.3 L635.1 590.3 L639.8 590.3 L644.5 591.9 L649.1 591.8 L653.8 591.8 L658.4 591.6 L663.0 590.7 L667.7 590.7 L672.4 590.6 L677.0 590.4 L681.7 590.4 L686.3 590.4 L691.0 590.5 L695.6 590.3 L700.2 590.5 L704.9 590.4 L709.5 590.8 L714.2 590.8 L718.9 590.6 L723.5 590.4 L728.2 590.8 L732.8 590.4 L737.5 590.5 L742.1 590.3 L746.8 590.5 L751.4 590.5 L756.0 590.5 L760.7 590.4 L765.4 590.5 L770.0 590.3 L774.7 590.4 L779.3 590.3 L784.0 593.0 L788.6 593.3 L793.2 592.9 L797.9 593.1 L802.6 590.4 L807.2 590.6 L811.9 592.1 L816.5 592.0 L821.1 591.7 L825.8 591.7 L830.5 591.7 L835.1 591.8 L839.8 591.8 L844.4 592.1 L849.1 592.0 L853.7 592.1 L858.4 591.6 L863.0 591.6 L867.6 592.0 L872.3 590.7 L877.0 590.6 L881.6 590.7 L886.2 591.4 L890.9 592.1 L895.6 591.8 L900.2 590.5 L904.9 590.7 L909.5 590.7 L914.1 590.7 L918.8 590.6 L923.5 591.7 L928.1 590.6 L932.8 590.6 L937.4 590.4 L942.1 590.3 L946.7 590.3 L951.4 590.5 L956.0 590.3 L960.6 590.7 L965.3 590.6 L970.0 590.6 L974.6 590.6 L979.2 590.6 L983.9 590.5 L988.6 590.3 L993.2 590.7 L997.9 593.4 L1002.5 590.5 L1007.1 590.5 L1011.8 590.6 L1016.5 590.3 L1021.1 590.7 L1025.8 591.4 L1030.4 590.3 L1035.1 590.4 L1039.7 590.7 L1044.3 591.9 L1049.0 591.7 L1053.7 591.7 L1058.3 591.4 L1063.0 592.1 L1067.6 590.5 L1072.2 590.6 L1076.9 590.7 L1081.6 590.6 L1086.2 590.6 L1090.8 592.0 L1095.5 592.3 L1100.2 590.4 L1104.8 590.7 L1109.5 590.4 L1114.1 590.6 L1118.8 590.3 L1123.4 590.3 L1128.1 590.4 L1132.7 590.6 L1137.3 590.6 L1142.0 590.6 L1146.7 590.4 L1151.3 592.4 L1156.0 590.5 L1160.6 590.5 L1165.2 590.3 L1169.9 591.4 L1174.6 592.1 L1179.2 591.8 L1183.8 590.8 L1188.5 590.3 L1193.2 590.5 L1197.8 590.7 L1202.5 590.8 L1207.1 590.5 L1211.8 590.4 L1216.4 590.4 L1221.1 590.8 L1225.7 590.4 L1230.3 590.6 L1235.0 592.4 L1239.7 590.5 L1244.3 590.8 L1249.0 590.3 L1253.6 590.7 L1258.2 590.5 L1262.9 592.9 L1267.6 592.9 L1272.2 593.0 L1276.8 592.6 L1281.5 592.5 L1286.2 592.6 L1290.8 590.3 L1295.5 590.5 L1300.1 590.5 L1304.8 590.4 L1309.4 590.3 L1314.1 590.4 L1318.7 590.4 L1323.3 592.6 L1328.0 590.3 L1332.7 590.7 L1337.3 590.7 L1342.0 590.3 L1346.6 590.8 L1351.2 590.6 L1355.9 590.7 L1360.6 590.4 L1365.2 590.5 L1369.8 590.5 L1374.5 590.8 L1379.2 590.6 L1383.8 590.5 L1388.5 590.5 L1393.1 590.4 L1397.8 590.3 L1402.4 592.4 L1407.1 592.5 L1411.7 592.6 L1416.3 592.5 L1421.0 590.4 L1425.7 590.4 L1430.3 590.5 L1435.0 590.4 L1439.6 590.5 L1444.2 590.8 L1448.9 590.7 L1453.6 591.4 L1458.2 592.1 L1462.8 591.8 L1467.5 590.8 L1472.2 592.1 L1476.8 592.2 L1481.5 592.0 L1486.1 592.1 L1490.8 591.8 L1495.4 592.2 L1500.1 591.9 L1504.7 592.3 L1509.3 592.1 L1514.0 591.9 L1518.7 591.8 L1523.3 591.9 L1528.0 592.1 L1532.6 592.1 L1537.2 591.8 L1541.9 591.8 L1546.6 592.0 L1551.2 592.1 L1555.8 592.0 L1560.5 590.6 L1565.2 590.5" fill="none" stroke="#fe3912" stroke-width="1.35" stroke-linejoin="round"/>
<g font-size="15" fill="#7d8185">
<text x="170.3" y="597.0" text-anchor="end">0.0</text>
<text x="170.3" y="561.7" text-anchor="end">2.0</text>
<text x="170.3" y="526.4" text-anchor="end">4.0</text>
<text x="170.3" y="491.1" text-anchor="end">6.0</text>
<text x="170.3" y="455.8" text-anchor="end">8.0</text>
<text x="170.3" y="420.5" text-anchor="end">10.0</text>
<text x="170.3" y="385.2" text-anchor="end">12.0</text>
<text x="286.2" y="613.0" text-anchor="middle">1:23:30</text>
<text x="425.7" y="613.0" text-anchor="middle">1:24:00</text>
<text x="565.2" y="613.0" text-anchor="middle">1:24:30</text>
<text x="704.7" y="613.0" text-anchor="middle">1:25:00</text>
<text x="844.2" y="613.0" text-anchor="middle">1:25:30</text>
<text x="983.7" y="613.0" text-anchor="middle">1:26:00</text>
<text x="1123.2" y="613.0" text-anchor="middle">1:26:30</text>
<text x="1262.7" y="613.0" text-anchor="middle">1:27:00</text>
<text x="1402.2" y="613.0" text-anchor="middle">1:27:30</text>
<text x="1572.8" y="613.0" text-anchor="end">1:28:00</text>
</g></svg>
<svg class="abs" style="left:1435px;top:664.0px" width="140" height="30" viewBox="0 0 140 30" fill="#3a3d43"><path d="M14.500 8.200V21.800L5.800 15ZM23.900 8.200V21.800L15.200 15Z" stroke="#3a3d43" stroke-width="1" stroke-linejoin="round"/><path d="M33.100 8.200V21.800L41.800 15ZM42.500 8.200V21.800L51.200 15Z" stroke="#3a3d43" stroke-width="1" stroke-linejoin="round"/><path d="M63 15.100H73.500M68.900 9V22.200" stroke="#3a3d43" stroke-width="3.700" stroke-linecap="round" fill="none"/><path d="M90 15.100H102" stroke="#3a3d43" stroke-width="3.700" stroke-linecap="round" fill="none"/><path d="M117.500 14.500H128.300L122.900 9ZM117.500 19.200H128.300L122.900 25Z" stroke="#3a3d43" stroke-width="1.600" stroke-linejoin="round"/></svg>
<div class="units" style="top:626px">megabits/s</div>
<div class="date" style="top:626px">Sun, Feb 20, 2022 | 1:28:05</div>
<div class="pill" style="left:174px;top:671px;background:#66aa00"></div>
<div class="leg" style="left:199px;top:664px;color:#66aa00">received</div>
<div class="leg" style="left:268.5px;top:665px;color:#66aa00;font-size:15.75px">0.0</div>
<div class="pill" style="left:331px;top:671px;background:#fe3912"></div>
<div class="leg" style="left:357px;top:664px;color:#fe3912">sent</div>
<div class="leg" style="left:396px;top:665px;color:#fe3912;font-size:15.75px;letter-spacing:-.3px">-0.1</div>

<div class="p" style="top:740px">Total IP traffic in the system.</div>
<div class="ctitle" style="top:778px">IP Bandwidth (system.ip)</div>
<svg class="abs" style="left:0;top:0;pointer-events:none" width="1620" height="1080" viewBox="0 0 1620 1080">
<path d="M286.4 800.2V1028.8M425.9 800.2V1028.8M565.4 800.2V1028.8M704.9 800.2V1028.8M844.4 800.2V1028.8M983.9 800.2V1028.8M1123.4 800.2V1028.8M1262.9 800.2V1028.8M1402.4 800.2V1028.8M1541.9 800.2V1028.8M175.6 1005.3H1565.2M175.6 975.3H1565.2M175.6 945.3H1565.2M175.6 915.3H1565.2M175.6 885.3H1565.2M175.6 855.3H1565.2M175.6 825.3H1565.2M175.6 800.2V1028.8H1565.2" fill="none" stroke="#2b3539" stroke-width="1.3"/>
<path d="M174.8 1006.0 L174.8 990.2 L179.4 993.6 L184.1 994.8 L188.7 994.7 L193.4 995.0 L198.0 994.8 L202.7 996.1 L207.3 995.4 L212.0 994.6 L216.6 995.1 L221.3 995.0 L225.9 996.1 L230.6 995.6 L235.2 995.6 L239.9 995.2 L244.5 995.3 L249.2 995.1 L253.8 993.2 L258.5 992.3 L263.1 991.3 L267.8 992.5 L272.4 995.1 L277.1 995.1 L281.8 996.1 L286.4 995.5 L291.0 996.1 L295.7 996.3 L300.3 995.0 L305.0 995.7 L309.6 995.6 L314.3 994.6 L318.9 994.8 L323.6 916.2 L328.2 806.5 L332.9 992.5 L337.5 993.8 L342.2 993.9 L346.8 992.9 L351.5 992.9 L356.1 992.2 L360.8 992.3 L365.4 993.2 L370.1 993.1 L374.8 993.0 L379.4 992.3 L384.0 991.9 L388.7 991.6 L393.3 991.1 L398.0 991.8 L402.6 991.0 L407.3 991.4 L411.9 991.5 L416.6 990.9 L421.2 991.3 L425.9 991.6 L430.5 992.6 L435.2 994.1 L439.9 994.7 L444.5 991.4 L449.1 992.9 L453.8 994.2 L458.4 994.9 L463.1 995.8 L467.8 994.8 L472.4 995.7 L477.0 995.5 L481.7 995.4 L486.4 993.6 L491.0 992.4 L495.6 991.6 L500.3 993.6 L504.9 993.3 L509.6 993.0 L514.2 992.8 L518.9 993.4 L523.5 994.0 L528.2 995.0 L532.9 995.2 L537.5 996.1 L542.1 995.1 L546.8 994.7 L551.5 994.7 L556.1 995.7 L560.8 993.9 L565.4 994.8 L570.0 994.4 L574.7 994.4 L579.4 993.9 L584.0 994.2 L588.6 994.0 L593.3 995.4 L598.0 995.7 L602.6 995.6 L607.2 916.9 L611.9 808.0 L616.5 992.5 L621.2 995.1 L625.9 994.5 L630.5 994.6 L635.1 993.3 L639.8 992.3 L644.5 993.9 L649.1 993.6 L653.8 993.3 L658.4 992.7 L663.0 992.2 L667.7 992.7 L672.4 993.0 L677.0 993.6 L681.7 992.4 L686.3 993.7 L691.0 993.1 L695.6 992.5 L700.2 993.4 L704.9 992.6 L709.5 992.2 L714.2 992.5 L718.9 992.4 L723.5 993.2 L728.2 992.7 L732.8 993.1 L737.5 992.2 L742.1 992.9 L746.8 992.7 L751.4 992.0 L756.0 992.3 L760.7 992.2 L765.4 992.4 L770.0 991.5 L774.7 990.8 L779.3 991.2 L784.0 991.3 L788.6 991.0 L793.2 991.4 L797.9 991.5 L802.6 991.4 L807.2 991.7 L811.9 992.0 L816.5 992.1 L821.1 992.5 L825.8 992.9 L830.5 992.4 L835.1 991.6 L839.8 991.5 L844.4 992.1 L849.1 991.6 L853.7 991.8 L858.4 992.1 L863.0 992.4 L867.6 992.4 L872.3 993.0 L877.0 992.6 L881.6 993.3 L886.2 916.9 L890.9 808.0 L895.6 992.5 L900.2 994.8 L904.9 994.3 L909.5 994.8 L914.1 995.1 L918.8 996.0 L923.5 995.2 L928.1 995.4 L932.8 994.0 L937.4 992.5 L942.1 991.0 L946.7 991.1 L951.4 990.9 L956.0 991.5 L960.6 991.1 L965.3 991.0 L970.0 991.1 L974.6 992.0 L979.2 991.4 L983.9 991.3 L988.6 991.5 L993.2 991.1 L997.9 992.0 L1002.5 994.0 L1007.1 994.7 L1011.8 995.3 L1016.5 994.3 L1021.1 994.2 L1025.8 994.9 L1030.4 994.4 L1035.1 994.4 L1039.7 994.5 L1044.3 995.3 L1049.0 994.5 L1053.7 994.7 L1058.3 994.4 L1063.0 994.8 L1067.6 994.1 L1072.2 992.3 L1076.9 991.7 L1081.6 991.8 L1086.2 992.8 L1090.8 992.5 L1095.5 992.1 L1100.2 992.0 L1104.8 992.7 L1109.5 992.6 L1114.1 994.0 L1118.8 995.5 L1123.4 995.0 L1128.1 995.4 L1132.7 995.7 L1137.3 995.8 L1142.0 994.2 L1146.7 991.4 L1151.3 991.4 L1156.0 993.7 L1160.6 992.8 L1165.2 992.1 L1169.9 914.2 L1174.6 802.0 L1179.2 992.5 L1183.8 991.2 L1188.5 992.4 L1193.2 991.9 L1197.8 992.1 L1202.5 991.7 L1207.1 992.2 L1211.8 991.3 L1216.4 992.0 L1221.1 992.5 L1225.7 991.7 L1230.3 992.4 L1235.0 991.8 L1239.7 992.2 L1244.3 991.8 L1249.0 991.4 L1253.6 992.0 L1258.2 992.6 L1262.9 992.2 L1267.6 992.8 L1272.2 993.2 L1276.8 993.4 L1281.5 992.6 L1286.2 992.7 L1290.8 992.3 L1295.5 992.8 L1300.1 993.8 L1304.8 993.1 L1309.4 991.4 L1314.1 992.7 L1318.7 992.5 L1323.3 992.1 L1328.0 992.1 L1332.7 992.6 L1337.3 991.8 L1342.0 991.5 L1346.6 992.1 L1351.2 991.9 L1355.9 992.2 L1360.6 992.2 L1365.2 991.3 L1369.8 992.1 L1374.5 991.3 L1379.2 991.4 L1383.8 992.7 L1388.5 994.8 L1393.1 994.7 L1397.8 995.3 L1402.4 994.6 L1407.1 993.1 L1411.7 991.3 L1416.3 991.8 L1421.0 992.2 L1425.7 992.1 L1430.3 992.7 L1435.0 992.1 L1439.6 992.3 L1444.2 992.5 L1448.9 991.8 L1453.6 919.6 L1458.2 814.0 L1462.8 992.5 L1467.5 994.0 L1472.2 992.8 L1476.8 993.2 L1481.5 994.0 L1486.1 994.0 L1490.8 994.3 L1495.4 992.6 L1500.1 992.4 L1504.7 991.6 L1509.3 991.7 L1514.0 991.4 L1518.7 991.5 L1523.3 991.4 L1528.0 992.4 L1532.6 991.4 L1537.2 991.8 L1541.9 991.6 L1546.6 991.9 L1551.2 991.8 L1555.8 991.4 L1560.5 991.6 L1565.2 991.6 L1565.2 1006.0 Z" fill="#66aa00" fill-opacity=".2"/>
<path d="M174.8 990.2 L179.4 993.6 L184.1 994.8 L188.7 994.7 L193.4 995.0 L198.0 994.8 L202.7 996.1 L207.3 995.4 L212.0 994.6 L216.6 995.1 L221.3 995.0 L225.9 996.1 L230.6 995.6 L235.2 995.6 L239.9 995.2 L244.5 995.3 L249.2 995.1 L253.8 993.2 L258.5 992.3 L263.1 991.3 L267.8 992.5 L272.4 995.1 L277.1 995.1 L281.8 996.1 L286.4 995.5 L291.0 996.1 L295.7 996.3 L300.3 995.0 L305.0 995.7 L309.6 995.6 L314.3 994.6 L318.9 994.8 L323.6 916.2 L328.2 806.5 L332.9 992.5 L337.5 993.8 L342.2 993.9 L346.8 992.9 L351.5 992.9 L356.1 992.2 L360.8 992.3 L365.4 993.2 L370.1 993.1 L374.8 993.0 L379.4 992.3 L384.0 991.9 L388.7 991.6 L393.3 991.1 L398.0 991.8 L402.6 991.0 L407.3 991.4 L411.9 991.5 L416.6 990.9 L421.2 991.3 L425.9 991.6 L430.5 992.6 L435.2 994.1 L439.9 994.7 L444.5 991.4 L449.1 992.9 L453.8 994.2 L458.4 994.9 L463.1 995.8 L467.8 994.8 L472.4 995.7 L477.0 995.5 L481.7 995.4 L486.4 993.6 L491.0 992.4 L495.6 991.6 L500.3 993.6 L504.9 993.3 L509.6 993.0 L514.2 992.8 L518.9 993.4 L523.5 994.0 L528.2 995.0 L532.9 995.2 L537.5 996.1 L542.1 995.1 L546.8 994.7 L551.5 994.7 L556.1 995.7 L560.8 993.9 L565.4 994.8 L570.0 994.4 L574.7 994.4 L579.4 993.9 L584.0 994.2 L588.6 994.0 L593.3 995.4 L598.0 995.7 L602.6 995.6 L607.2 916.9 L611.9 808.0 L616.5 992.5 L621.2 995.1 L625.9 994.5 L630.5 994.6 L635.1 993.3 L639.8 992.3 L644.5 993.9 L649.1 993.6 L653.8 993.3 L658.4 992.7 L663.0 992.2 L667.7 992.7 L672.4 993.0 L677.0 993.6 L681.7 992.4 L686.3 993.7 L691.0 993.1 L695.6 992.5 L700.2 993.4 L704.9 992.6 L709.5 992.2 L714.2 992.5 L718.9 992.4 L723.5 993.2 L728.2 992.7 L732.8 993.1 L737.5 992.2 L742.1 992.9 L746.8 992.7 L751.4 992.0 L756.0 992.3 L760.7 992.2 L765.4 992.4 L770.0 991.5 L774.7 990.8 L779.3 991.2 L784.0 991.3 L788.6 991.0 L793.2 991.4 L797.9 991.5 L802.6 991.4 L807.2 991.7 L811.9 992.0 L816.5 992.1 L821.1 992.5 L825.8 992.9 L830.5 992.4 L835.1 991.6 L839.8 991.5 L844.4 992.1 L849.1 991.6 L853.7 991.8 L858.4 992.1 L863.0 992.4 L867.6 992.4 L872.3 993.0 L877.0 992.6 L881.6 993.3 L886.2 916.9 L890.9 808.0 L895.6 992.5 L900.2 994.8 L904.9 994.3 L909.5 994.8 L914.1 995.1 L918.8 996.0 L923.5 995.2 L928.1 995.4 L932.8 994.0 L937.4 992.5 L942.1 991.0 L946.7 991.1 L951.4 990.9 L956.0 991.5 L960.6 991.1 L965.3 991.0 L970.0 991.1 L974.6 992.0 L979.2 991.4 L983.9 991.3 L988.6 991.5 L993.2 991.1 L997.9 992.0 L1002.5 994.0 L1007.1 994.7 L1011.8 995.3 L1016.5 994.3 L1021.1 994.2 L1025.8 994.9 L1030.4 994.4 L1035.1 994.4 L1039.7 994.5 L1044.3 995.3 L1049.0 994.5 L1053.7 994.7 L1058.3 994.4 L1063.0 994.8 L1067.6 994.1 L1072.2 992.3 L1076.9 991.7 L1081.6 991.8 L1086.2 992.8 L1090.8 992.5 L1095.5 992.1 L1100.2 992.0 L1104.8 992.7 L1109.5 992.6 L1114.1 994.0 L1118.8 995.5 L1123.4 995.0 L1128.1 995.4 L1132.7 995.7 L1137.3 995.8 L1142.0 994.2 L1146.7 991.4 L1151.3 991.4 L1156.0 993.7 L1160.6 992.8 L1165.2 992.1 L1169.9 914.2 L1174.6 802.0 L1179.2 992.5 L1183.8 991.2 L1188.5 992.4 L1193.2 991.9 L1197.8 992.1 L1202.5 991.7 L1207.1 992.2 L1211.8 991.3 L1216.4 992.0 L1221.1 992.5 L1225.7 991.7 L1230.3 992.4 L1235.0 991.8 L1239.7 992.2 L1244.3 991.8 L1249.0 991.4 L1253.6 992.0 L1258.2 992.6 L1262.9 992.2 L1267.6 992.8 L1272.2 993.2 L1276.8 993.4 L1281.5 992.6 L1286.2 992.7 L1290.8 992.3 L1295.5 992.8 L1300.1 993.8 L1304.8 993.1 L1309.4 991.4 L1314.1 992.7 L1318.7 992.5 L1323.3 992.1 L1328.0 992.1 L1332.7 992.6 L1337.3 991.8 L1342.0 991.5 L1346.6 992.1 L1351.2 991.9 L1355.9 992.2 L1360.6 992.2 L1365.2 991.3 L1369.8 992.1 L1374.5 991.3 L1379.2 991.4 L1383.8 992.7 L1388.5 994.8 L1393.1 994.7 L1397.8 995.3 L1402.4 994.6 L1407.1 993.1 L1411.7 991.3 L1416.3 991.8 L1421.0 992.2 L1425.7 992.1 L1430.3 992.7 L1435.0 992.1 L1439.6 992.3 L1444.2 992.5 L1448.9 991.8 L1453.6 919.6 L1458.2 814.0 L1462.8 992.5 L1467.5 994.0 L1472.2 992.8 L1476.8 993.2 L1481.5 994.0 L1486.1 994.0 L1490.8 994.3 L1495.4 992.6 L1500.1 992.4 L1504.7 991.6 L1509.3 991.7 L1514.0 991.4 L1518.7 991.5 L1523.3 991.4 L1528.0 992.4 L1532.6 991.4 L1537.2 991.8 L1541.9 991.6 L1546.6 991.9 L1551.2 991.8 L1555.8 991.4 L1560.5 991.6 L1565.2 991.6" fill="none" stroke="#66aa00" stroke-width="1.35" stroke-linejoin="round"/>
<path d="M174.8 1006.0 L174.8 1016.1 L179.4 1016.1 L184.1 1016.9 L188.7 1016.5 L193.4 1016.0 L198.0 1015.2 L202.7 1015.2 L207.3 1015.9 L212.0 1016.7 L216.6 1015.3 L221.3 1015.6 L225.9 1015.5 L230.6 1015.5 L235.2 1015.7 L239.9 1015.7 L244.5 1015.0 L249.2 1017.3 L253.8 1020.2 L258.5 1020.9 L263.1 1021.9 L267.8 1020.3 L272.4 1016.7 L277.1 1016.2 L281.8 1015.0 L286.4 1015.4 L291.0 1016.0 L295.7 1016.3 L300.3 1015.6 L305.0 1015.4 L309.6 1016.5 L314.3 1015.9 L318.9 1015.5 L323.6 1015.5 L328.2 1015.9 L332.9 1017.2 L337.5 1018.5 L342.2 1018.9 L346.8 1020.3 L351.5 1021.1 L356.1 1020.7 L360.8 1020.8 L365.4 1021.2 L370.1 1022.3 L374.8 1022.2 L379.4 1024.1 L384.0 1025.2 L388.7 1025.6 L393.3 1026.5 L398.0 1025.3 L402.6 1026.2 L407.3 1025.7 L411.9 1025.5 L416.6 1025.9 L421.2 1026.7 L425.9 1026.4 L430.5 1023.1 L435.2 1019.6 L439.9 1019.1 L444.5 1024.2 L449.1 1024.3 L453.8 1018.2 L458.4 1016.3 L463.1 1016.2 L467.8 1016.0 L472.4 1016.7 L477.0 1016.7 L481.7 1018.2 L486.4 1023.0 L491.0 1025.4 L495.6 1025.0 L500.3 1021.5 L504.9 1020.2 L509.6 1019.7 L514.2 1020.0 L518.9 1019.5 L523.5 1019.3 L528.2 1017.6 L532.9 1015.4 L537.5 1016.2 L542.1 1015.3 L546.8 1015.4 L551.5 1015.0 L556.1 1015.9 L560.8 1016.4 L565.4 1017.3 L570.0 1017.0 L574.7 1017.1 L579.4 1016.4 L584.0 1017.1 L588.6 1016.9 L593.3 1016.0 L598.0 1015.8 L602.6 1015.3 L607.2 1016.2 L611.9 1015.3 L616.5 1015.9 L621.2 1017.8 L625.9 1017.5 L630.5 1019.5 L635.1 1021.7 L639.8 1020.6 L644.5 1019.0 L649.1 1018.8 L653.8 1020.6 L658.4 1020.9 L663.0 1020.2 L667.7 1021.2 L672.4 1020.2 L677.0 1021.3 L681.7 1021.2 L686.3 1020.1 L691.0 1020.4 L695.6 1021.0 L700.2 1021.3 L704.9 1020.0 L709.5 1020.4 L714.2 1020.2 L718.9 1021.3 L723.5 1020.5 L728.2 1020.9 L732.8 1021.1 L737.5 1021.1 L742.1 1020.7 L746.8 1021.0 L751.4 1020.9 L756.0 1021.1 L760.7 1020.1 L765.4 1021.8 L770.0 1024.3 L774.7 1026.2 L779.3 1025.5 L784.0 1025.9 L788.6 1025.7 L793.2 1025.8 L797.9 1024.9 L802.6 1023.7 L807.2 1023.4 L811.9 1023.6 L816.5 1023.3 L821.1 1023.5 L825.8 1022.4 L830.5 1023.1 L835.1 1022.6 L839.8 1023.8 L844.4 1023.1 L849.1 1022.5 L853.7 1022.8 L858.4 1022.8 L863.0 1021.9 L867.6 1022.1 L872.3 1022.1 L877.0 1021.9 L881.6 1021.6 L886.2 1021.8 L890.9 1020.9 L895.6 1020.5 L900.2 1017.7 L904.9 1016.6 L909.5 1016.9 L914.1 1016.7 L918.8 1016.8 L923.5 1016.5 L928.1 1017.1 L932.8 1017.5 L937.4 1022.3 L942.1 1023.7 L946.7 1024.2 L951.4 1024.1 L956.0 1024.3 L960.6 1023.5 L965.3 1024.8 L970.0 1024.2 L974.6 1024.9 L979.2 1024.1 L983.9 1024.0 L988.6 1025.1 L993.2 1025.0 L997.9 1023.4 L1002.5 1019.5 L1007.1 1017.7 L1011.8 1017.0 L1016.5 1016.1 L1021.1 1017.2 L1025.8 1017.4 L1030.4 1016.9 L1035.1 1017.1 L1039.7 1016.5 L1044.3 1016.6 L1049.0 1017.4 L1053.7 1017.2 L1058.3 1016.6 L1063.0 1016.0 L1067.6 1017.5 L1072.2 1020.6 L1076.9 1021.2 L1081.6 1022.7 L1086.2 1022.8 L1090.8 1021.8 L1095.5 1022.3 L1100.2 1022.7 L1104.8 1021.8 L1109.5 1019.6 L1114.1 1017.2 L1118.8 1016.1 L1123.4 1016.5 L1128.1 1016.3 L1132.7 1014.9 L1137.3 1015.9 L1142.0 1017.6 L1146.7 1023.2 L1151.3 1022.8 L1156.0 1020.5 L1160.6 1021.2 L1165.2 1023.5 L1169.9 1023.2 L1174.6 1023.0 L1179.2 1023.2 L1183.8 1023.6 L1188.5 1023.5 L1193.2 1022.1 L1197.8 1023.3 L1202.5 1022.9 L1207.1 1023.1 L1211.8 1022.9 L1216.4 1023.4 L1221.1 1023.0 L1225.7 1023.5 L1230.3 1022.9 L1235.0 1022.3 L1239.7 1022.8 L1244.3 1022.5 L1249.0 1022.0 L1253.6 1019.7 L1258.2 1017.8 L1262.9 1017.9 L1267.6 1017.9 L1272.2 1018.2 L1276.8 1017.6 L1281.5 1017.1 L1286.2 1016.7 L1290.8 1017.8 L1295.5 1017.5 L1300.1 1018.0 L1304.8 1022.2 L1309.4 1024.4 L1314.1 1024.0 L1318.7 1024.1 L1323.3 1023.1 L1328.0 1023.1 L1332.7 1023.8 L1337.3 1024.0 L1342.0 1024.1 L1346.6 1023.8 L1351.2 1024.1 L1355.9 1023.8 L1360.6 1023.6 L1365.2 1024.2 L1369.8 1024.6 L1374.5 1023.8 L1379.2 1024.6 L1383.8 1022.6 L1388.5 1019.1 L1393.1 1017.3 L1397.8 1017.3 L1402.4 1017.6 L1407.1 1020.7 L1411.7 1021.9 L1416.3 1022.2 L1421.0 1021.4 L1425.7 1021.7 L1430.3 1021.7 L1435.0 1022.1 L1439.6 1022.3 L1444.2 1021.6 L1448.9 1021.8 L1453.6 1019.7 L1458.2 1016.9 L1462.8 1016.5 L1467.5 1019.5 L1472.2 1019.8 L1476.8 1020.4 L1481.5 1020.8 L1486.1 1020.9 L1490.8 1020.7 L1495.4 1021.1 L1500.1 1021.9 L1504.7 1023.2 L1509.3 1023.7 L1514.0 1022.8 L1518.7 1023.0 L1523.3 1023.8 L1528.0 1023.9 L1532.6 1023.9 L1537.2 1023.5 L1541.9 1022.7 L1546.6 1022.5 L1551.2 1022.9 L1555.8 1023.4 L1560.5 1023.2 L1565.2 1023.8 L1565.2 1006.0 Z" fill="#fe3912" fill-opacity=".2"/>
<path d="M174.8 1016.1 L179.4 1016.1 L184.1 1016.9 L188.7 1016.5 L193.4 1016.0 L198.0 1015.2 L202.7 1015.2 L207.3 1015.9 L212.0 1016.7 L216.6 1015.3 L221.3 1015.6 L225.9 1015.5 L230.6 1015.5 L235.2 1015.7 L239.9 1015.7 L244.5 1015.0 L249.2 1017.3 L253.8 1020.2 L258.5 1020.9 L263.1 1021.9 L267.8 1020.3 L272.4 1016.7 L277.1 1016.2 L281.8 1015.0 L286.4 1015.4 L291.0 1016.0 L295.7 1016.3 L300.3 1015.6 L305.0 1015.4 L309.6 1016.5 L314.3 1015.9 L318.9 1015.5 L323.6 1015.5 L328.2 1015.9 L332.9 1017.2 L337.5 1018.5 L342.2 1018.9 L346.8 1020.3 L351.5 1021.1 L356.1 1020.7 L360.8 1020.8 L365.4 1021.2 L370.1 1022.3 L374.8 1022.2 L379.4 1024.1 L384.0 1025.2 L388.7 1025.6 L393.3 1026.5 L398.0 1025.3 L402.6 1026.2 L407.3 1025.7 L411.9 1025.5 L416.6 1025.9 L421.2 1026.7 L425.9 1026.4 L430.5 1023.1 L435.2 1019.6 L439.9 1019.1 L444.5 1024.2 L449.1 1024.3 L453.8 1018.2 L458.4 1016.3 L463.1 1016.2 L467.8 1016.0 L472.4 1016.7 L477.0 1016.7 L481.7 1018.2 L486.4 1023.0 L491.0 1025.4 L495.6 1025.0 L500.3 1021.5 L504.9 1020.2 L509.6 1019.7 L514.2 1020.0 L518.9 1019.5 L523.5 1019.3 L528.2 1017.6 L532.9 1015.4 L537.5 1016.2 L542.1 1015.3 L546.8 1015.4 L551.5 1015.0 L556.1 1015.9 L560.8 1016.4 L565.4 1017.3 L570.0 1017.0 L574.7 1017.1 L579.4 1016.4 L584.0 1017.1 L588.6 1016.9 L593.3 1016.0 L598.0 1015.8 L602.6 1015.3 L607.2 1016.2 L611.9 1015.3 L616.5 1015.9 L621.2 1017.8 L625.9 1017.5 L630.5 1019.5 L635.1 1021.7 L639.8 1020.6 L644.5 1019.0 L649.1 1018.8 L653.8 1020.6 L658.4 1020.9 L663.0 1020.2 L667.7 1021.2 L672.4 1020.2 L677.0 1021.3 L681.7 1021.2 L686.3 1020.1 L691.0 1020.4 L695.6 1021.0 L700.2 1021.3 L704.9 1020.0 L709.5 1020.4 L714.2 1020.2 L718.9 1021.3 L723.5 1020.5 L728.2 1020.9 L732.8 1021.1 L737.5 1021.1 L742.1 1020.7 L746.8 1021.0 L751.4 1020.9 L756.0 1021.1 L760.7 1020.1 L765.4 1021.8 L770.0 1024.3 L774.7 1026.2 L779.3 1025.5 L784.0 1025.9 L788.6 1025.7 L793.2 1025.8 L797.9 1024.9 L802.6 1023.7 L807.2 1023.4 L811.9 1023.6 L816.5 1023.3 L821.1 1023.5 L825.8 1022.4 L830.5 1023.1 L835.1 1022.6 L839.8 1023.8 L844.4 1023.1 L849.1 1022.5 L853.7 1022.8 L858.4 1022.8 L863.0 1021.9 L867.6 1022.1 L872.3 1022.1 L877.0 1021.9 L881.6 1021.6 L886.2 1021.8 L890.9 1020.9 L895.6 1020.5 L900.2 1017.7 L904.9 1016.6 L909.5 1016.9 L914.1 1016.7 L918.8 1016.8 L923.5 1016.5 L928.1 1017.1 L932.8 1017.5 L937.4 1022.3 L942.1 1023.7 L946.7 1024.2 L951.4 1024.1 L956.0 1024.3 L960.6 1023.5 L965.3 1024.8 L970.0 1024.2 L974.6 1024.9 L979.2 1024.1 L983.9 1024.0 L988.6 1025.1 L993.2 1025.0 L997.9 1023.4 L1002.5 1019.5 L1007.1 1017.7 L1011.8 1017.0 L1016.5 1016.1 L1021.1 1017.2 L1025.8 1017.4 L1030.4 1016.9 L1035.1 1017.1 L1039.7 1016.5 L1044.3 1016.6 L1049.0 1017.4 L1053.7 1017.2 L1058.3 1016.6 L1063.0 1016.0 L1067.6 1017.5 L1072.2 1020.6 L1076.9 1021.2 L1081.6 1022.7 L1086.2 1022.8 L1090.8 1021.8 L1095.5 1022.3 L1100.2 1022.7 L1104.8 1021.8 L1109.5 1019.6 L1114.1 1017.2 L1118.8 1016.1 L1123.4 1016.5 L1128.1 1016.3 L1132.7 1014.9 L1137.3 1015.9 L1142.0 1017.6 L1146.7 1023.2 L1151.3 1022.8 L1156.0 1020.5 L1160.6 1021.2 L1165.2 1023.5 L1169.9 1023.2 L1174.6 1023.0 L1179.2 1023.2 L1183.8 1023.6 L1188.5 1023.5 L1193.2 1022.1 L1197.8 1023.3 L1202.5 1022.9 L1207.1 1023.1 L1211.8 1022.9 L1216.4 1023.4 L1221.1 1023.0 L1225.7 1023.5 L1230.3 1022.9 L1235.0 1022.3 L1239.7 1022.8 L1244.3 1022.5 L1249.0 1022.0 L1253.6 1019.7 L1258.2 1017.8 L1262.9 1017.9 L1267.6 1017.9 L1272.2 1018.2 L1276.8 1017.6 L1281.5 1017.1 L1286.2 1016.7 L1290.8 1017.8 L1295.5 1017.5 L1300.1 1018.0 L1304.8 1022.2 L1309.4 1024.4 L1314.1 1024.0 L1318.7 1024.1 L1323.3 1023.1 L1328.0 1023.1 L1332.7 1023.8 L1337.3 1024.0 L1342.0 1024.1 L1346.6 1023.8 L1351.2 1024.1 L1355.9 1023.8 L1360.6 1023.6 L1365.2 1024.2 L1369.8 1024.6 L1374.5 1023.8 L1379.2 1024.6 L1383.8 1022.6 L1388.5 1019.1 L1393.1 1017.3 L1397.8 1017.3 L1402.4 1017.6 L1407.1 1020.7 L1411.7 1021.9 L1416.3 1022.2 L1421.0 1021.4 L1425.7 1021.7 L1430.3 1021.7 L1435.0 1022.1 L1439.6 1022.3 L1444.2 1021.6 L1448.9 1021.8 L1453.6 1019.7 L1458.2 1016.9 L1462.8 1016.5 L1467.5 1019.5 L1472.2 1019.8 L1476.8 1020.4 L1481.5 1020.8 L1486.1 1020.9 L1490.8 1020.7 L1495.4 1021.1 L1500.1 1021.9 L1504.7 1023.2 L1509.3 1023.7 L1514.0 1022.8 L1518.7 1023.0 L1523.3 1023.8 L1528.0 1023.9 L1532.6 1023.9 L1537.2 1023.5 L1541.9 1022.7 L1546.6 1022.5 L1551.2 1022.9 L1555.8 1023.4 L1560.5 1023.2 L1565.2 1023.8" fill="none" stroke="#fe3912" stroke-width="1.35" stroke-linejoin="round"/>
<g font-size="15" fill="#7d8185">
<text x="170.3" y="1013.2" text-anchor="end">0.0</text>
<text x="170.3" y="983.2" text-anchor="end">2.0</text>
<text x="170.3" y="953.2" text-anchor="end">4.0</text>
<text x="170.3" y="923.2" text-anchor="end">6.0</text>
<text x="170.3" y="893.2" text-anchor="end">8.0</text>
<text x="170.3" y="863.2" text-anchor="end">10.0</text>
<text x="170.3" y="833.2" text-anchor="end">12.0</text>
<text x="286.2" y="1047.6" text-anchor="middle">1:23:30</text>
<text x="425.7" y="1047.6" text-anchor="middle">1:24:00</text>
<text x="565.2" y="1047.6" text-anchor="middle">1:24:30</text>
<text x="704.7" y="1047.6" text-anchor="middle">1:25:00</text>
<text x="844.2" y="1047.6" text-anchor="middle">1:25:30</text>
<text x="983.7" y="1047.6" text-anchor="middle">1:26:00</text>
<text x="1123.2" y="1047.6" text-anchor="middle">1:26:30</text>
<text x="1262.7" y="1047.6" text-anchor="middle">1:27:00</text>
<text x="1402.2" y="1047.6" text-anchor="middle">1:27:30</text>
<text x="1572.8" y="1047.6" text-anchor="end">1:28:00</text>
</g></svg>
<div class="units" style="top:1061px">megabits/s</div>
<div class="date" style="top:1061px">Sun, Feb 20, 2022 | 1:28:05</div>

<!-- right nav -->
<div id="nav">
<div class="abs" style="left:1604px;top:84px;width:3px;height:40px;background:#7b5fa8"></div>
<svg class="abs" style="left:1641.89px;top:90.75px" width="14.62" height="19.50" viewBox="0 0 384 512" fill="#7b5fa8"><path fill-rule="evenodd" d="M0 512V48C0 21.490 21.490 0 48 0h288c26.510 0 48 21.490 48 48v464L192 400 0 512z"/></svg>
<a class="main" style="top:89px;color:#7b5fa8;font-weight:bold">System Overview</a>
<a class="sub" style="top:126.70px">cpu</a>
<a class="sub" style="top:155.70px">load</a>
<a class="sub" style="top:183.70px">disk</a>
<a class="sub" style="top:212.70px">ram</a>
<a class="sub" style="top:241.70px">swap</a>
<div class="abs" style="left:1604px;top:267px;width:1px;height:29px;background:#64429a"></div>
<a class="sub" style="top:270.70px;color:#5d418d">network</a>
<a class="sub" style="top:298.70px">processes</a>
<a class="sub" style="top:327.70px">idlejitter</a>
<a class="sub" style="top:356.70px">interrupts</a>
<a class="sub" style="top:385.70px">softirqs</a>
<a class="sub" style="top:413.70px">softnet</a>
<a class="sub" style="top:442.70px">entropy</a>
<a class="sub" style="top:471.70px">uptime</a>
<a class="sub" style="top:500.70px">clock synchronization</a>
<a class="sub" style="top:528.70px">ipc semaphores</a>
<a class="sub" style="top:557.70px">ipc shared memory</a>
<svg class="abs" style="left:1642.71px;top:605.95px" width="12.19" height="19.50" viewBox="0 0 320 512" fill="#7d7d7d"><path fill-rule="evenodd" d="M296 160H180.600l42.600-129.800C227.200 15 215.700 0 200 0H56C44 0 33.800 8.900 32.200 20.800l-32 240C-1.700 275.200 9.500 288 24 288h118.700L96.600 482.500c-3.600 15.200 8 29.500 23.300 29.500 8.400 0 16.400-4.400 20.800-12l176-304c9.300-15.900-2.200-36-20.700-36z"/></svg>
<a class="main" style="top:603.70px">CPUs</a>
<svg class="abs" style="left:1639.05px;top:645.80px" width="19.50" height="19.50" viewBox="0 0 512 512" fill="#7d7d7d"><path d="M144 16h224a40 40 0 0 1 40 40v400a40 40 0 0 1-40 40H144a40 40 0 0 1-40-40V56a40 40 0 0 1 40-40zM8 96 h64 v32 h-64z M440 96 h64 v32 h-64zM8 192 h64 v32 h-64z M440 192 h64 v32 h-64zM8 288 h64 v32 h-64z M440 288 h64 v32 h-64zM8 384 h64 v32 h-64z M440 384 h64 v32 h-64z"/></svg>
<a class="main" style="top:643.55px">Memory</a>
<svg class="abs" style="left:1637.83px;top:685.65px" width="21.94" height="19.50" viewBox="0 0 576 512" fill="#7d7d7d"><path fill-rule="evenodd" d="M576 304v96c0 26.510-21.490 48-48 48H48c-26.510 0-48-21.490-48-48v-96c0-26.510 21.490-48 48-48h480c26.510 0 48 21.490 48 48zm-48-80a79.557 79.557 0 0 1 30.777 6.165L462.250 85.374A48.003 48.003 0 0 0 422.311 64H153.689a48 48 0 0 0-39.938 21.374L17.223 230.165A79.557 79.557 0 0 1 48 224h480zm-48 96c-17.673 0-32 14.327-32 32s14.327 32 32 32 32-14.327 32-32-14.327-32-32-32zm-96 0c-17.673 0-32 14.327-32 32s14.327 32 32 32 32-14.327 32-32-14.327-32-32-32z"/></svg>
<a class="main" style="top:683.40px">Disks</a>
<svg class="abs" style="left:1636.61px;top:725.50px" width="24.38" height="19.50" viewBox="0 0 640 512" fill="#7d7d7d"><path fill-rule="evenodd" d="M537.600 226.600c4.100-10.700 6.400-22.400 6.400-34.600 0-53-43-96-96-96-19.700 0-38.100 6-53.300 16.200C367 64.200 315.300 32 256 32c-88.400 0-160 71.600-160 160 0 2.700.100 5.400.200 8.100C40.200 219.800 0 273.200 0 336c0 79.500 64.500 144 144 144h368c70.700 0 128-57.300 128-128 0-61.900-44-113.600-102.400-125.400z"/></svg>
<a class="main" style="top:723.25px">Networking Stack</a>
<svg class="abs" style="left:1636.61px;top:765.35px" width="24.38" height="19.50" viewBox="0 0 640 512" fill="#7d7d7d"><path fill-rule="evenodd" d="M537.600 226.600c4.100-10.700 6.400-22.400 6.400-34.600 0-53-43-96-96-96-19.700 0-38.100 6-53.300 16.200C367 64.200 315.300 32 256 32c-88.400 0-160 71.600-160 160 0 2.700.100 5.400.200 8.100C40.200 219.800 0 273.200 0 336c0 79.500 64.500 144 144 144h368c70.700 0 128-57.300 128-128 0-61.900-44-113.600-102.400-125.400z"/></svg>
<a class="main" style="top:763.10px">IPv4 Networking</a>
<svg class="abs" style="left:1636.61px;top:805.20px" width="24.38" height="19.50" viewBox="0 0 640 512" fill="#7d7d7d"><path fill-rule="evenodd" d="M537.600 226.600c4.100-10.700 6.400-22.400 6.400-34.600 0-53-43-96-96-96-19.700 0-38.100 6-53.300 16.200C367 64.200 315.300 32 256 32c-88.400 0-160 71.600-160 160 0 2.700.100 5.400.200 8.100C40.200 219.800 0 273.200 0 336c0 79.500 64.500 144 144 144h368c70.700 0 128-57.300 128-128 0-61.900-44-113.600-102.400-125.400z"/></svg>
<a class="main" style="top:802.95px">IPv6 Networking</a>
<svg class="abs" style="left:1636.61px;top:845.05px" width="24.38" height="19.50" viewBox="0 0 640 512" fill="#7d7d7d"><path d="M232 32h176a16 16 0 0 1 16 16v112a16 16 0 0 1-16 16H232a16 16 0 0 1-16-16V48a16 16 0 0 1 16-16zM16 352h128a16 16 0 0 1 16 16v96a16 16 0 0 1-16 16H16a16 16 0 0 1-16-16v-96a16 16 0 0 1 16-16zM256 352h128a16 16 0 0 1 16 16v96a16 16 0 0 1-16 16H256a16 16 0 0 1-16-16v-96a16 16 0 0 1 16-16zM496 352h128a16 16 0 0 1 16 16v96a16 16 0 0 1-16 16H496a16 16 0 0 1-16-16v-96a16 16 0 0 1 16-16zM300 176h40v64h240v112h-40v-72H340v72h-40v-72H100v72H60V240h240z"/></svg>
<a class="main" style="top:842.80px">Network Interfaces</a>
<svg class="abs" style="left:1639.05px;top:884.90px" width="19.50" height="19.50" viewBox="0 0 512 512" fill="#7d7d7d"><path fill-rule="evenodd" d="M466.500 83.700l-192-80a48.150 48.150 0 0 0-36.900 0l-192 80C27.700 91.100 16 108.600 16 128c0 198.500 114.500 335.700 221.500 380.300 11.800 4.900 25.100 4.900 36.900 0C360.100 472.600 496 349.300 496 128c0-19.400-11.700-36.900-29.500-44.300zM256.100 446.300l-.1-381 175.900 73.300c-3.300 151.400-82.100 261.100-175.800 307.700z"/></svg>
<a class="main" style="top:882.65px">Firewall (netfilter)</a>
<svg class="abs" style="left:1636.61px;top:924.75px" width="24.38" height="19.50" viewBox="0 0 640 512" fill="#7d7d7d"><path fill-rule="evenodd" d="M400.0 299.2L383.9 378.7L328.4 367.3L310.7 393.7L342.0 440.8L274.4 485.6L243.2 438.4L212.0 444.5L200.8 500.0L121.3 483.9L132.7 428.4L106.3 410.7L59.2 442.0L14.4 374.4L61.6 343.2L55.5 312.0L0.0 300.8L16.1 221.3L71.6 232.7L89.3 206.3L58.0 159.2L125.6 114.4L156.8 161.6L188.0 155.5L199.2 100.0L278.7 116.1L267.3 171.6L293.7 189.3L340.8 158.0L385.6 225.6L338.4 256.8L344.5 288.0ZM130.0 300.0a70.0 70.0 0 1 0 140.0 0a70.0 70.0 0 1 0 -140.0 0zM628.7 100.2L628.7 155.8L589.8 154.0L580.8 172.6L606.5 202.0L563.1 236.6L540.1 205.0L520.1 209.6L513.1 248.0L459.0 235.6L469.3 198.0L453.2 185.2L418.9 203.7L394.8 153.7L430.6 138.3L430.6 117.7L394.8 102.3L418.9 52.3L453.2 70.8L469.3 58.0L459.0 20.4L513.1 8.0L520.1 46.4L540.1 51.0L563.1 19.4L606.5 54.0L580.8 83.4L589.8 102.0ZM470.0 128.0a42.0 42.0 0 1 0 84.0 0a42.0 42.0 0 1 0 -84.0 0zM623.8 407.5L608.4 456.9L575.3 445.5L562.0 459.8L575.8 492.0L527.6 510.9L515.9 477.9L496.4 476.4L479.9 507.3L435.0 481.4L453.5 451.6L442.5 435.5L408.1 441.8L400.4 390.5L435.2 386.5L441.0 367.8L414.6 344.8L449.8 306.8L474.7 331.5L492.9 324.4L494.4 289.4L546.1 293.3L542.3 328.1L559.2 337.9L587.5 317.3L616.7 360.1L587.1 378.9L590.0 398.2ZM472.0 400.0a40.0 40.0 0 1 0 80.0 0a40.0 40.0 0 1 0 -80.0 0z"/></svg>
<a class="main" style="top:922.50px">systemd Services</a>
<svg class="abs" style="left:1639.05px;top:964.60px" width="19.50" height="19.50" viewBox="0 0 512 512" fill="#7d7d7d"><path fill-rule="evenodd" d="M320.200 243.800l-49.700 99.400c-6 12.100-23.400 11.700-28.900-.600l-56.900-126.300-30 71.700H60.600l182.500 186.500c7.100 7.300 18.600 7.300 25.700 0L451.400 288H342.300l-22.100-44.200zM473.700 73.900l-2.400-2.500c-51.500-52.600-135.800-52.600-187.400 0L256 100l-27.900-28.500c-51.500-52.700-135.900-52.700-187.400 0l-2.400 2.400C-10.400 123.700-12.500 203 31 256h102.400l35.900-86.200c5.400-12.900 23.600-13.200 29.400-.400l58.200 129.300 49-97.900c5.900-11.800 22.700-11.800 28.600 0l27.600 55.200H481c43.500-53 41.400-132.300-7.300-182.100z"/></svg>
<a class="main" style="top:962.35px">Applications</a>
<svg class="abs" style="left:1640.27px;top:1004.45px" width="17.06" height="19.50" viewBox="0 0 448 512" fill="#7d7d7d"><path fill-rule="evenodd" d="M224 256c70.700 0 128-57.300 128-128S294.700 0 224 0 96 57.300 96 128s57.300 128 128 128zm89.600 32h-16.700c-22.200 10.200-46.900 16-72.900 16s-50.600-5.800-72.900-16h-16.700C60.200 288 0 348.200 0 422.400V464c0 26.500 21.500 48 48 48h352c26.500 0 48-21.500 48-48v-41.600c0-74.200-60.200-134.400-134.400-134.400z"/></svg>
<a class="main" style="top:1002.20px">User Groups</a>
<svg class="abs" style="left:1636.61px;top:1044.30px" width="24.38" height="19.50" viewBox="0 0 640 512" fill="#7d7d7d"><path fill-rule="evenodd" d="M96 224c35.300 0 64-28.700 64-64s-28.700-64-64-64-64 28.700-64 64 28.700 64 64 64zm448 0c35.300 0 64-28.700 64-64s-28.700-64-64-64-64 28.700-64 64 28.700 64 64 64zm32 32h-64c-17.600 0-33.500 7.100-45.100 18.600 40.300 22.100 68.900 62 75.100 109.400h66c17.700 0 32-14.300 32-32v-32c0-35.300-28.700-64-64-64zm-256 0c61.900 0 112-50.100 112-112S381.900 32 320 32 208 82.100 208 144s50.100 112 112 112zm76.800 32h-8.300c-20.800 10-43.900 16-68.500 16s-47.600-6-68.500-16h-8.300C179.600 288 128 339.600 128 403.200V432c0 26.500 21.500 48 48 48h288c26.500 0 48-21.500 48-48v-28.800c0-63.600-51.600-115.200-115.200-115.200zm-223.700-13.400C161.500 263.100 145.600 256 128 256H64c-35.300 0-64 28.700-64 64v32c0 17.700 14.300 32 32 32h65.900c6.300-47.400 34.900-87.300 75.200-109.400z"/></svg>
<a class="main" style="top:1042.05px">Users</a>
<div class="abs" style="left:1883px;top:87px;width:6.500px;height:511px;border-radius:3px;background:#32363a"></div>
</div>

<div class="abs" id="osd"></div>
<svg class="abs" style="left:1738px;top:27px" width="28" height="28" viewBox="0 0 28 28" fill="none" stroke="#80838e" stroke-width="2.100" stroke-linejoin="round" stroke-linecap="round"><path d="M7.450 15.600V10.900A6.520 6.520 0 0 1 20.500 10.900V15.600C20.500 17.600 22.900 18.300 22.900 20.600A3 3 0 0 1 19.900 23.600H8.100A3 3 0 0 1 5.100 20.600C5.100 18.300 7.450 17.600 7.450 15.600Z"/><path d="M8 17.600H14.600" stroke-width="1.900"/><path d="M13.300 4.200L13.950 3.300L14.600 4.200" stroke-width="1.400"/></svg>
<div class="abs" style="left:1782.500px;top:27px;width:35px;height:28.500px;border-radius:14.200px;background:#77717d;border:1px solid #96494f"></div>
<div class="abs hd" style="left:1782.500px;top:27px;width:35px;height:28.500px;text-align:center;line-height:28px;font-size:17px;font-weight:bold;color:#b3474d">0</div>
<div class="abs" style="left:1830.500px;top:27px;width:35px;height:28.500px;border-radius:14.200px;background:#7d7d7d;border:1px solid #967d32"></div>
<div class="abs hd" style="left:1830.500px;top:27px;width:35px;height:28.500px;text-align:center;line-height:28px;font-size:17px;font-weight:bold;color:#a5821e">0</div>
<svg class="abs" style="left:0;top:0" width="1920" height="140" viewBox="0 0 1920 140"><defs><clipPath id="cl"><rect x="1754.5" y="67.8" width="92.3" height="29.8" rx="14.9"/><circle cx="1807" cy="59.200" r="19.6"/><circle cx="1780.200" cy="63.500" r="10.9"/></clipPath></defs><g fill="#1292b4"><rect x="1751.1" y="64.4" width="99.1" height="36.6" rx="18.3"/><circle cx="1807" cy="59.200" r="23.0"/><circle cx="1780.200" cy="63.500" r="14.3"/></g><g fill="#b9c8cc"><rect x="1754.5" y="67.8" width="92.3" height="29.8" rx="14.9"/><circle cx="1807" cy="59.200" r="19.6"/><circle cx="1780.200" cy="63.500" r="10.9"/></g><g clip-path="url(#cl)"><rect x="1783" y="27.500" width="34" height="27.500" rx="13.700" fill="#f4f8f8" stroke="#f0b4b4" stroke-width="1.200"/><text x="1800" y="47.300" text-anchor="middle" font-size="17" font-weight="bold" fill="#f0a0a0">0</text></g></svg>
<div class="abs" id="pagescroll"><i></i></div>
<div class="abs" id="topline"></div>
</div>
</body>
</html>
